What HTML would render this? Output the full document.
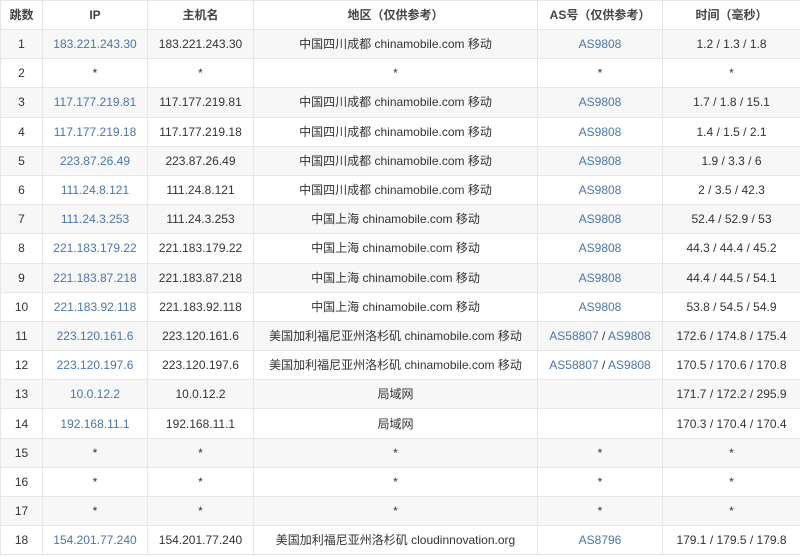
<!DOCTYPE html>
<html><head><meta charset="utf-8"><style>
body{margin:0;background:#fff;font-family:"Liberation Sans","Noto Sans CJK SC",sans-serif;font-size:12px;color:#333}
table{border-collapse:collapse;width:800px;table-layout:fixed}
td,th{border:1px solid #e6e6e6;text-align:center;vertical-align:middle;padding:0;height:28.2px;line-height:14px;white-space:nowrap;overflow:hidden}
td span,th span{display:inline-block;line-height:14px;vertical-align:middle}
th{background:#fff;font-weight:bold;color:#444;height:28px}
tr:nth-child(even) td{background:#f7f7f7}
a{color:#4a76ab;text-decoration:none}
</style></head><body>
<table>
<colgroup><col style="width:42px"><col style="width:105px"><col style="width:106px"><col style="width:284px"><col style="width:125px"><col style="width:138px"></colgroup>
<tr><th>跳数</th><th>IP</th><th>主机名</th><th>地区（仅供参考）</th><th>AS号（仅供参考）</th><th>时间（毫秒）</th></tr>
<tr><td>1</td><td><a>183.221.243.30</a></td><td>183.221.243.30</td><td>中国四川成都 chinamobile.com 移动</td><td><a>AS9808</a></td><td>1.2 / 1.3 / 1.8</td></tr>
<tr><td>2</td><td>*</td><td>*</td><td>*</td><td>*</td><td>*</td></tr>
<tr><td>3</td><td><a>117.177.219.81</a></td><td>117.177.219.81</td><td>中国四川成都 chinamobile.com 移动</td><td><a>AS9808</a></td><td>1.7 / 1.8 / 15.1</td></tr>
<tr><td>4</td><td><a>117.177.219.18</a></td><td>117.177.219.18</td><td>中国四川成都 chinamobile.com 移动</td><td><a>AS9808</a></td><td>1.4 / 1.5 / 2.1</td></tr>
<tr><td>5</td><td><a>223.87.26.49</a></td><td>223.87.26.49</td><td>中国四川成都 chinamobile.com 移动</td><td><a>AS9808</a></td><td>1.9 / 3.3 / 6</td></tr>
<tr><td>6</td><td><a>111.24.8.121</a></td><td>111.24.8.121</td><td>中国四川成都 chinamobile.com 移动</td><td><a>AS9808</a></td><td>2 / 3.5 / 42.3</td></tr>
<tr><td>7</td><td><a>111.24.3.253</a></td><td>111.24.3.253</td><td>中国上海 chinamobile.com 移动</td><td><a>AS9808</a></td><td>52.4 / 52.9 / 53</td></tr>
<tr><td>8</td><td><a>221.183.179.22</a></td><td>221.183.179.22</td><td>中国上海 chinamobile.com 移动</td><td><a>AS9808</a></td><td>44.3 / 44.4 / 45.2</td></tr>
<tr><td>9</td><td><a>221.183.87.218</a></td><td>221.183.87.218</td><td>中国上海 chinamobile.com 移动</td><td><a>AS9808</a></td><td>44.4 / 44.5 / 54.1</td></tr>
<tr><td>10</td><td><a>221.183.92.118</a></td><td>221.183.92.118</td><td>中国上海 chinamobile.com 移动</td><td><a>AS9808</a></td><td>53.8 / 54.5 / 54.9</td></tr>
<tr><td>11</td><td><a>223.120.161.6</a></td><td>223.120.161.6</td><td>美国加利福尼亚州洛杉矶 chinamobile.com 移动</td><td><a>AS58807</a> / <a>AS9808</a></td><td>172.6 / 174.8 / 175.4</td></tr>
<tr><td>12</td><td><a>223.120.197.6</a></td><td>223.120.197.6</td><td>美国加利福尼亚州洛杉矶 chinamobile.com 移动</td><td><a>AS58807</a> / <a>AS9808</a></td><td>170.5 / 170.6 / 170.8</td></tr>
<tr><td>13</td><td><a>10.0.12.2</a></td><td>10.0.12.2</td><td>局域网</td><td></td><td>171.7 / 172.2 / 295.9</td></tr>
<tr><td>14</td><td><a>192.168.11.1</a></td><td>192.168.11.1</td><td>局域网</td><td></td><td>170.3 / 170.4 / 170.4</td></tr>
<tr><td>15</td><td>*</td><td>*</td><td>*</td><td>*</td><td>*</td></tr>
<tr><td>16</td><td>*</td><td>*</td><td>*</td><td>*</td><td>*</td></tr>
<tr><td>17</td><td>*</td><td>*</td><td>*</td><td>*</td><td>*</td></tr>
<tr><td>18</td><td><a>154.201.77.240</a></td><td>154.201.77.240</td><td>美国加利福尼亚州洛杉矶 cloudinnovation.org</td><td><a>AS8796</a></td><td>179.1 / 179.5 / 179.8</td></tr>
</table>
</body></html>
